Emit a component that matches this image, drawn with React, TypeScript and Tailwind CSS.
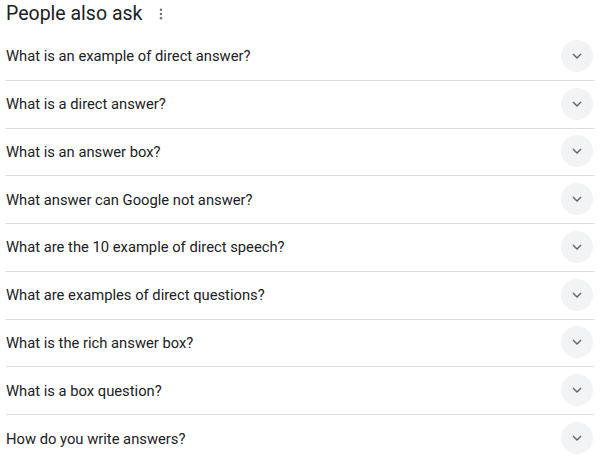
import React from "react";

const questions = [
  "What is an example of direct answer?",
  "What is a direct answer?",
  "What is an answer box?",
  "What answer can Google not answer?",
  "What are the 10 example of direct speech?",
  "What are examples of direct questions?",
  "What is the rich answer box?",
  "What is a box question?",
  "How do you write answers?",
];

function Chevron() {
  return (
    <svg width="16" height="16" viewBox="0 0 24 24" fill="#5f6368">
      <path d="M12 16.41l-6.71-6.7 1.42-1.42 5.29 5.3 5.29-5.3 1.42 1.42z" />
    </svg>
  );
}

export default function App() {
  return (
    <div
      className="w-[604px] h-[457px] bg-white overflow-hidden pl-[6px] pr-[10px]"
      style={{ fontFamily: "Roboto, Arial, sans-serif" }}
    >
      <div className="h-[33px] flex items-center">
        <span className="text-[19.5px] leading-[26px] text-[#202124] -mt-[5px]">People also ask</span>
        <svg className="ml-[11px] -mt-[5px]" width="16" height="16" viewBox="0 0 24 24" fill="#70757a">
          <circle cx="12" cy="5.5" r="1.9" />
          <circle cx="12" cy="12" r="1.9" />
          <circle cx="12" cy="18.5" r="1.9" />
        </svg>
      </div>
      <div className="flex flex-col">
        {questions.map((q, i) => (
          <div
            key={i}
            className={
              "h-[47.75px] flex items-center justify-between " +
              (i < questions.length - 1 ? "border-b border-[#dadce0]" : "")
            }
          >
            <span className="text-[14.75px] text-[#202124] leading-[20px]">{q}</span>
            <div className="w-[32px] h-[32px] rounded-full bg-[#f1f3f4] flex items-center justify-center mr-[1px] -mt-[1px]">
              <Chevron />
            </div>
          </div>
        ))}
      </div>
    </div>
  );
}
